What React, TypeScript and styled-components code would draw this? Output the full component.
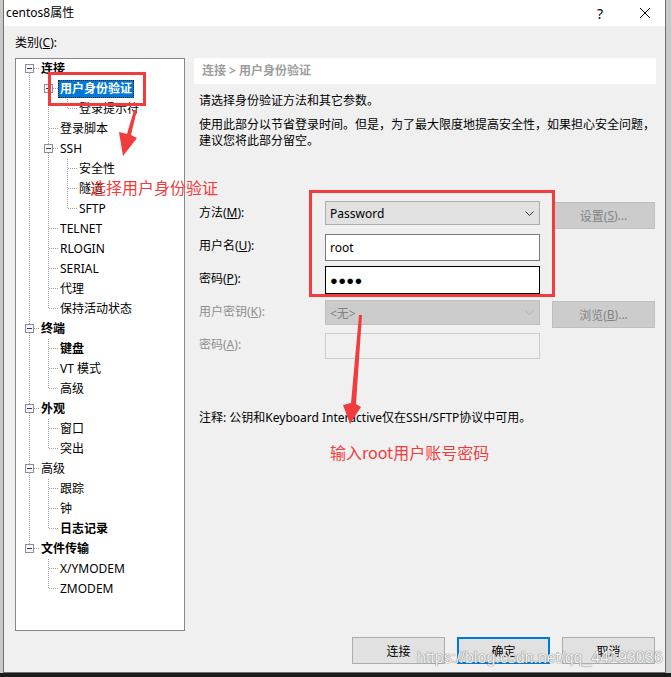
import React from 'react';
import styled, { createGlobalStyle } from 'styled-components';

const GlobalStyle = createGlobalStyle`
  html, body { margin: 0; padding: 0; }
  body {
    width: 671px;
    height: 677px;
    overflow: hidden;
    background: linear-gradient(to bottom, #c9c9c9 0, #c9c9c9 673px, #1b1b1b 673px);
    font-family: "Noto Sans", "Noto Sans CJK SC", sans-serif;
    font-size: 12px;
    color: #000;
  }
`;

const Stage = styled.div`
  position: relative;
  width: 671px;
  height: 677px;
`;

const Window = styled.div`
  margin-left: 3px;
  width: 663px;
  height: 673px;
  box-sizing: border-box;
  border-left: 1px solid #707070;
  border-right: 1px solid #707070;
  border-bottom: 1px solid #707070;
  background: #f0f0f0;
  display: flex;
  flex-direction: column;
`;

const TitleBar = styled.div`
  height: 26px;
  background: #fff;
  display: flex;
  align-items: center;
`;

const Title = styled.div`
  flex: 1;
  padding-left: 2px;
  line-height: 26px;
  font-size: 12px;
`;

const CaptionBtn = styled.div<{ $w: number }>`
  width: ${p => p.$w}px;
  height: 26px;
  display: flex;
  align-items: center;
  justify-content: center;
  font-size: 14px;
  color: #000;
`;

const Body = styled.div`
  flex: 1;
  display: flex;
  flex-direction: column;
  padding: 8px 9px 8px 11px;
`;

const CategoryLabel = styled.div`
  height: 17px;
  line-height: 17px;
`;

const Main = styled.div`
  margin-top: 7px;
  height: 573px;
  display: flex;
  gap: 9px;
`;

const TreeBox = styled.div`
  width: 170px;
  height: 573px;
  box-sizing: border-box;
  border: 1px solid #828790;
  background: #fff;
  padding-left: 4px;
`;

const TreeRow = styled.div`
  height: 20px;
  display: flex;
  align-items: center;
`;

const TreeLabel = styled.span<{ $bold?: boolean; $selected?: boolean }>`
  height: 18px;
  line-height: 18px;
  padding: 0 2px;
  white-space: nowrap;
  font-weight: ${p => (p.$bold ? 700 : 400)};
  background: ${p => (p.$selected ? '#0078d7' : 'transparent')};
  color: ${p => (p.$selected ? '#fff' : '#000')};
  outline: ${p => (p.$selected ? '1px dotted #222' : 'none')};
  outline-offset: -1px;
`;

const Panel = styled.div`
  width: 462px;
  display: flex;
  flex-direction: column;
`;

const Breadcrumb = styled.div`
  height: 26px;
  line-height: 26px;
  background: #fff;
  padding-left: 8px;
  color: #9d9d9d;
  font-weight: 700;
`;

const Content = styled.div`
  padding-left: 5px;
  display: flex;
  flex-direction: column;
`;

const Para = styled.p<{ $mt: number; $lh: number }>`
  margin: ${p => p.$mt}px 0 0;
  line-height: ${p => p.$lh}px;
  white-space: nowrap;
`;

const Form = styled.div`
  margin-top: 51px;
  display: flex;
  flex-direction: column;
`;

const FormRow = styled.div`
  height: 33px;
  display: flex;
  align-items: flex-start;
`;

const FieldLabel = styled.div<{ $disabled?: boolean }>`
  width: 126px;
  line-height: 26px;
  white-space: nowrap;
  color: ${p => (p.$disabled ? '#8f8f8f' : '#000')};
`;

const Combo = styled.div<{ $disabled?: boolean; $mt: number; $h: number }>`
  width: 215px;
  height: ${p => p.$h}px;
  margin-top: ${p => p.$mt}px;
  box-sizing: border-box;
  border: 1px solid ${p => (p.$disabled ? '#bfbfbf' : '#adadad')};
  background: ${p => (p.$disabled ? '#cccccc' : '#e1e1e1')};
  color: ${p => (p.$disabled ? '#838383' : '#000')};
  display: flex;
  align-items: center;
  justify-content: space-between;
  padding: 0 5px 0 4px;
`;

const TextBox = styled.div<{ $disabled?: boolean; $focused?: boolean; $mt: number; $h: number }>`
  width: 215px;
  height: ${p => p.$h}px;
  margin-top: ${p => p.$mt}px;
  box-sizing: border-box;
  border: 1px solid ${p => (p.$disabled ? '#cccccc' : p.$focused ? '#000' : '#7a7a7a')};
  background: ${p => (p.$disabled ? '#f0f0f0' : '#fff')};
  display: flex;
  align-items: center;
  padding-left: 4px;
`;

const Dots = styled.span`
  font-family: "Liberation Sans", "DejaVu Sans", sans-serif;
  font-size: 13px;
  letter-spacing: 0.3px;
`;

const SideButton = styled.div<{ $mt: number }>`
  margin-left: 12px;
  margin-top: ${p => p.$mt}px;
  width: 103px;
  height: 27px;
  box-sizing: border-box;
  border: 1px solid #bfbfbf;
  background: #cccccc;
  color: #838383;
  display: flex;
  align-items: center;
  justify-content: center;
`;

const Note = styled.div`
  margin-top: 44px;
  line-height: 17px;
  white-space: nowrap;
`;

const Footer = styled.div`
  margin-top: 6px;
  padding-right: 1px;
  display: flex;
  justify-content: flex-end;
  gap: 12px;
`;

const DlgButton = styled.div<{ $default?: boolean }>`
  width: 93px;
  height: 27px;
  box-sizing: border-box;
  border: ${p => (p.$default ? '2px solid #0078d7' : '1px solid #adadad')};
  background: #e1e1e1;
  display: flex;
  align-items: center;
  justify-content: center;
`;

const RedBox = styled.div<{ $l: number; $t: number; $w: number; $h: number }>`
  position: absolute;
  left: ${p => p.$l}px;
  top: ${p => p.$t}px;
  width: ${p => p.$w}px;
  height: ${p => p.$h}px;
  box-sizing: border-box;
  border: 3px solid #f03c3c;
  pointer-events: none;
`;

const Annotation = styled.div<{ $l: number; $t: number }>`
  position: absolute;
  left: ${p => p.$l}px;
  top: ${p => p.$t}px;
  font-family: "Noto Sans CJK SC", "Noto Sans", sans-serif;
  font-size: 16px;
  line-height: 20px;
  color: #f23c3c;
  white-space: nowrap;
  pointer-events: none;
`;

const Watermark = styled.div`
  position: absolute;
  left: 417px;
  top: 649px;
  font-family: "Liberation Sans", Arial, sans-serif;
  font-size: 16px;
  line-height: 18px;
  color: rgba(255, 255, 255, 0.92);
  text-shadow: 0 0 1px #7a7a7a, 0 0 1px #7a7a7a;
  white-space: nowrap;
  pointer-events: none;
`;

const ArrowLayer = styled.svg`
  position: absolute;
  left: 0;
  top: 0;
  pointer-events: none;
`;

type TNode = { label: string; bold?: boolean; selected?: boolean; children?: TNode[] };

const TREE: TNode[] = [
  {
    label: '连接', bold: true, children: [
      { label: '用户身份验证', bold: true, selected: true, children: [{ label: '登录提示符' }] },
      { label: '登录脚本' },
      { label: 'SSH', children: [{ label: '安全性' }, { label: '隧道' }, { label: 'SFTP' }] },
      { label: 'TELNET' },
      { label: 'RLOGIN' },
      { label: 'SERIAL' },
      { label: '代理' },
      { label: '保持活动状态' },
    ],
  },
  { label: '终端', bold: true, children: [{ label: '键盘', bold: true }, { label: 'VT 模式' }, { label: '高级' }] },
  { label: '外观', bold: true, children: [{ label: '窗口' }, { label: '突出' }] },
  { label: '高级', children: [{ label: '跟踪' }, { label: '钟' }, { label: '日志记录', bold: true }] },
  { label: '文件传输', bold: true, children: [{ label: 'X/YMODEM' }, { label: 'ZMODEM' }] },
];

type FlatRow = { node: TNode; guides: boolean[]; up: boolean; down: boolean; box: boolean };

function flatten(nodes: TNode[], depth: number, guides: boolean[], out: FlatRow[]) {
  nodes.forEach((n, i) => {
    const hasNext = i < nodes.length - 1;
    out.push({ node: n, guides, up: !(depth === 0 && i === 0), down: hasNext, box: !!n.children });
    if (n.children) flatten(n.children, depth + 1, guides.concat(hasNext), out);
  });
  return out;
}

const ROWS = flatten(TREE, 0, [], []);

const DOT = { stroke: '#a0a0a0', strokeDasharray: '1 1', shapeRendering: 'crispEdges' as const };

const Guide = ({ line }: { line: boolean }) => (
  <svg width="19" height="20" style={{ flex: 'none' }}>
    {line && <line x1="9.5" y1="0" x2="9.5" y2="20" {...DOT} />}
  </svg>
);

const Connector = ({ up, down, box }: { up: boolean; down: boolean; box: boolean }) => (
  <svg width="19" height="20" style={{ flex: 'none' }}>
    {up && <line x1="9.5" y1="0" x2="9.5" y2="10" {...DOT} />}
    {down && <line x1="9.5" y1="10" x2="9.5" y2="20" {...DOT} />}
    <line x1="10" y1="9.5" x2="19" y2="9.5" {...DOT} />
    {box && (
      <g shapeRendering="crispEdges">
        <rect x="5.5" y="5.5" width="8" height="8" fill="#f6f6f6" stroke="#8e8f8f" />
        <line x1="7" y1="9.5" x2="12" y2="9.5" stroke="#1e3a6e" />
      </g>
    )}
  </svg>
);

const Chevron = ({ color }: { color: string }) => (
  <svg width="9" height="5" viewBox="0 0 9 5">
    <polyline points="0.5,0.5 4.5,4.5 8.5,0.5" fill="none" stroke={color} strokeWidth="1" />
  </svg>
);

const CloseIcon = () => (
  <svg width="10" height="10" viewBox="0 0 10 10">
    <line x1="0" y1="0" x2="10" y2="10" stroke="#000" strokeWidth="1" />
    <line x1="10" y1="0" x2="0" y2="10" stroke="#000" strokeWidth="1" />
  </svg>
);

export default function App() {
  return (
    <Stage>
      <GlobalStyle />
      <Window>
        <TitleBar>
          <Title>centos8属性</Title>
          <CaptionBtn $w={50}>?</CaptionBtn>
          <CaptionBtn $w={40}><CloseIcon /></CaptionBtn>
        </TitleBar>
        <Body>
          <CategoryLabel>类别(<u>C</u>):</CategoryLabel>
          <Main>
            <TreeBox>
              {ROWS.map((r, i) => (
                <TreeRow key={i}>
                  {r.guides.map((g, k) => <Guide key={k} line={g} />)}
                  <Connector up={r.up} down={r.down} box={r.box} />
                  <TreeLabel $bold={r.node.bold} $selected={r.node.selected}>{r.node.label}</TreeLabel>
                </TreeRow>
              ))}
            </TreeBox>
            <Panel>
              <Breadcrumb>连接 &gt; 用户身份验证</Breadcrumb>
              <Content>
                <Para $mt={8} $lh={17}>请选择身份验证方法和其它参数。</Para>
                <Para $mt={8} $lh={16}>
                  使用此部分以节省登录时间。但是，为了最大限度地提高安全性，如果担心安全问题，
                  <br />
                  建议您将此部分留空。
                </Para>
                <Form>
                  <FormRow>
                    <FieldLabel>方法(<u>M</u>):</FieldLabel>
                    <Combo $mt={1} $h={24}>
                      <span>Password</span>
                      <Chevron color="#333" />
                    </Combo>
                    <SideButton $mt={2}>设置(<u>S</u>)...</SideButton>
                  </FormRow>
                  <FormRow>
                    <FieldLabel>用户名(<u>U</u>):</FieldLabel>
                    <TextBox $mt={1} $h={27}>root</TextBox>
                  </FormRow>
                  <FormRow>
                    <FieldLabel>密码(<u>P</u>):</FieldLabel>
                    <TextBox $mt={0} $h={28} $focused><Dots>●●●●</Dots></TextBox>
                  </FormRow>
                  <FormRow>
                    <FieldLabel $disabled>用户密钥(<u>K</u>):</FieldLabel>
                    <Combo $mt={1} $h={25} $disabled>
                      <span>&lt;无&gt;</span>
                      <Chevron color="#b3b3b3" />
                    </Combo>
                    <SideButton $mt={2}>浏览(<u>B</u>)...</SideButton>
                  </FormRow>
                  <FormRow>
                    <FieldLabel $disabled>密码(<u>A</u>):</FieldLabel>
                    <TextBox $mt={1} $h={26} $disabled />
                  </FormRow>
                </Form>
                <Note>注释: 公钥和Keyboard Interactive仅在SSH/SFTP协议中可用。</Note>
              </Content>
            </Panel>
          </Main>
          <Footer>
            <DlgButton>连接</DlgButton>
            <DlgButton $default>确定</DlgButton>
            <DlgButton>取消</DlgButton>
          </Footer>
        </Body>
      </Window>

      <RedBox $l={48} $t={72} $w={98} $h={34} />
      <RedBox $l={309} $t={190} $w={246} $h={107} />
      <Annotation $l={90} $t={177}>选择用户身份验证</Annotation>
      <Annotation $l={330} $t={442}>输入root用户账号密码</Annotation>
      <ArrowLayer width="671" height="677" viewBox="0 0 671 677">
        <polygon points="134,110 137,110 131,135 137,138 123,156 119,132 127,134" fill="#f03c3c" />
        <polygon points="359,315 362,315 356,404 361,407 350,424 343,405 351,403" fill="#f03c3c" />
      </ArrowLayer>
      <Watermark>https://blog.csdn.net/qq_44193036</Watermark>
    </Stage>
  );
}
